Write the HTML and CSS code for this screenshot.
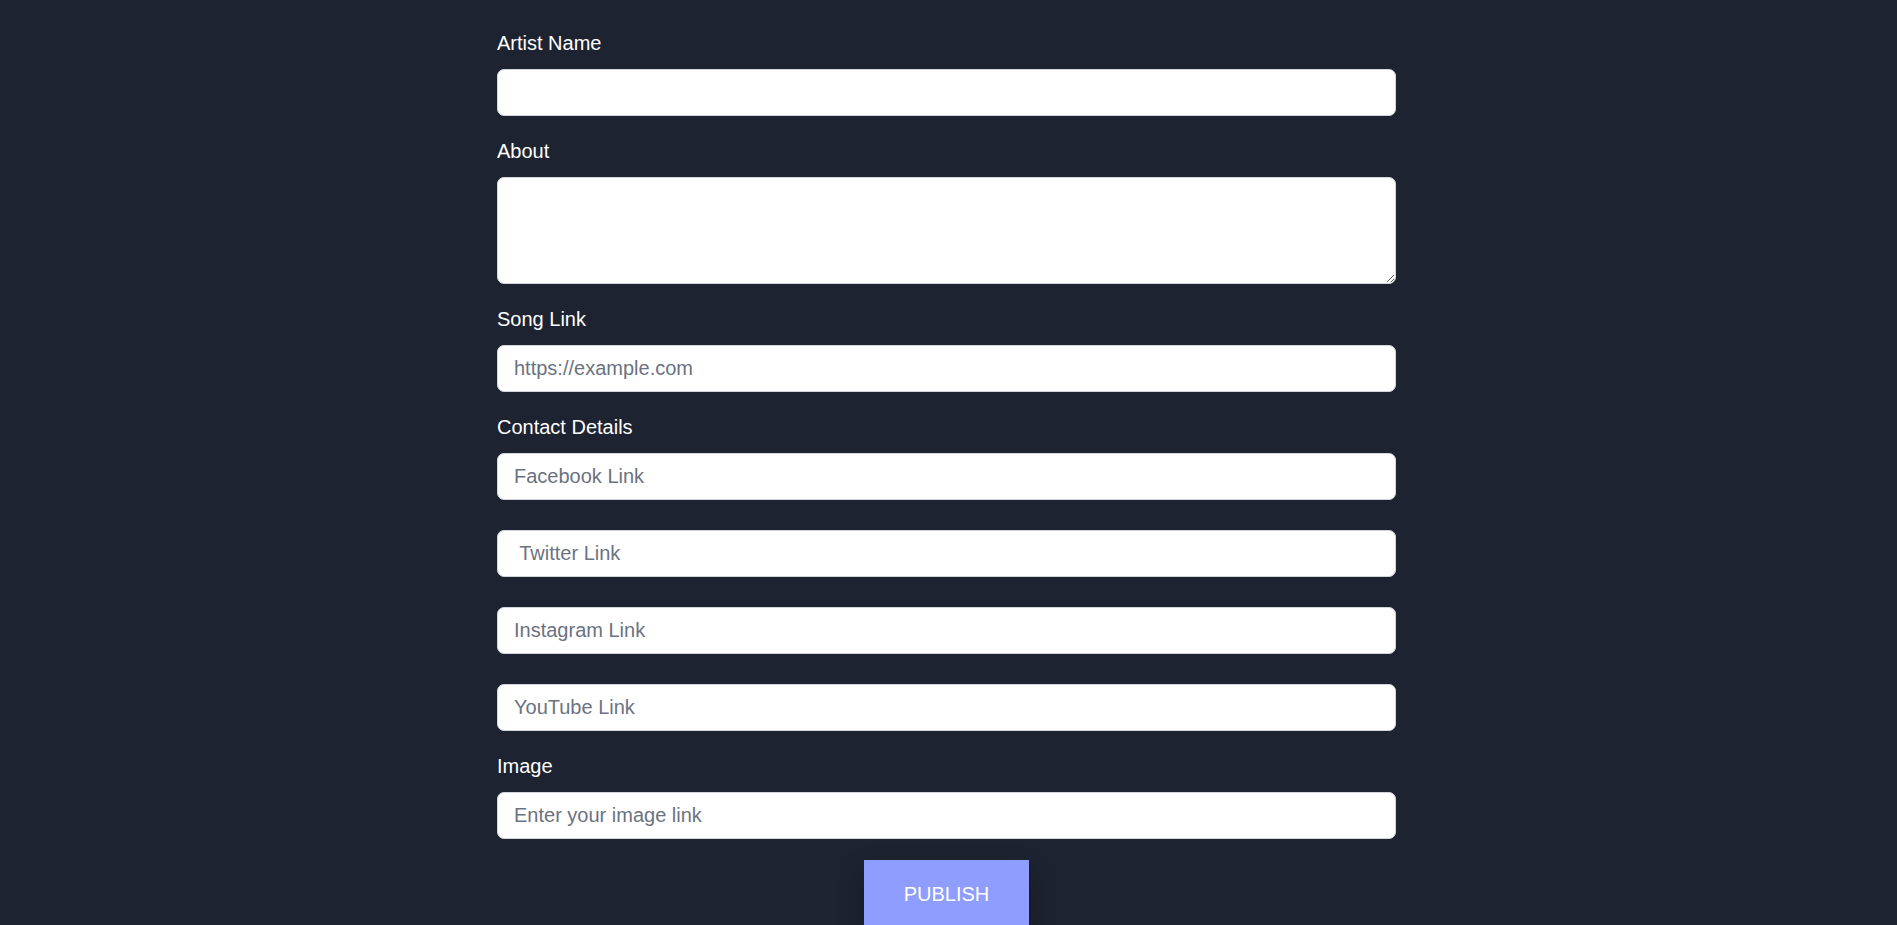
FILE: index.html
```html
<!DOCTYPE html>
<html>
<head>
    <title>Add Artist</title>
    <link rel="stylesheet" href="styles.css">
</head>
<body>
    <form class="artist-form">
        <div class="field">
            <label>Artist Name</label>
            <input type="text">
        </div>
        <div class="field">
            <label>About</label>
            <textarea></textarea>
        </div>
        <div class="field">
            <label>Song Link</label>
            <input type="text" placeholder="https://example.com">
        </div>
        <div class="field">
            <label>Contact Details</label>
            <div class="contacts">
                <input type="text" placeholder="Facebook Link">
                <input type="text" placeholder=" Twitter Link">
                <input type="text" placeholder="Instagram Link">
                <input type="text" placeholder="YouTube Link">
            </div>
        </div>
        <div class="field">
            <label>Image</label>
            <input type="text" placeholder="Enter your image link">
        </div>
        <div class="actions">
            <button type="button">PUBLISH</button>
        </div>
    </form>
</body>
</html>
```

FILE: styles.css
```css
body {
    font-family: "Liberation Sans", Arial, sans-serif;
    background-color: #1e2331;
    margin: 0;
    padding: 29px 4px 0 0;
}

.artist-form {
    width: 899px;
    margin: 0 auto;
}

.field {
    margin-bottom: 21px;
}

.field label {
    display: block;
    color: #fff;
    font-size: 20px;
    line-height: 28px;
    margin-bottom: 12px;
}

.field input,
.field textarea {
    display: block;
    box-sizing: border-box;
    width: 100%;
    height: 47px;
    padding: 0 16px;
    font-family: inherit;
    font-size: 20px;
    color: #111827;
    background-color: #fff;
    border: 1px solid #d1d5db;
    border-radius: 7px;
    outline: none;
}

.field textarea {
    height: 107px;
    padding: 10px 16px;
}

.field input::placeholder {
    color: #6b7280;
}

.contacts {
    display: flex;
    flex-direction: column;
    gap: 30px;
}

.actions {
    text-align: center;
}

.actions button {
    padding: 20px 40px;
    font-family: inherit;
    font-size: 20px;
    line-height: 28px;
    color: #fff;
    background-color: #8e9dfe;
    border: none;
    box-shadow: 0 10px 25px rgba(0, 0, 0, 0.3);
    cursor: pointer;
}
```
